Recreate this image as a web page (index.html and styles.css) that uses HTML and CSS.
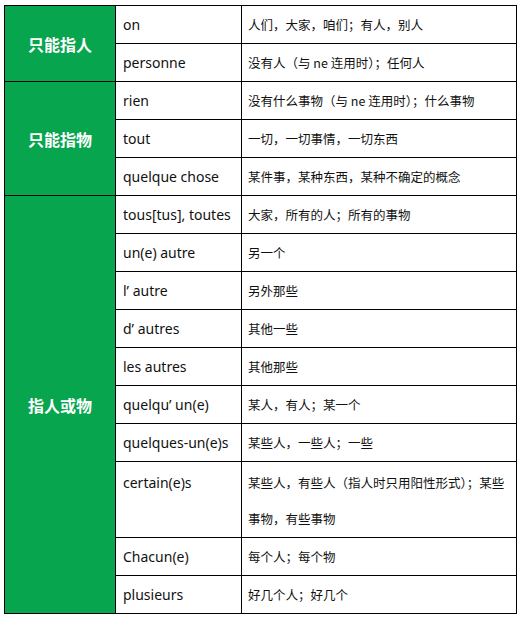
FILE: index.html
```html
<!DOCTYPE html>
<html lang="zh-CN">
<head>
<meta charset="utf-8">
<title>泛指代词</title>
<link rel="stylesheet" href="styles.css">
</head>
<body>
<div class="page">
<table class="grid">
  <colgroup>
    <col class="c1"><col class="c2"><col class="c3">
  </colgroup>
  <tbody>
    <tr><th class="cat" rowspan="2">只能指人</th><td class="fr">on</td><td class="zh">人们，大家，咱们；有人，别人</td></tr>
    <tr><td class="fr">personne</td><td class="zh">没有人（与 ne 连用时）；任何人</td></tr>
    <tr><th class="cat" rowspan="3">只能指物</th><td class="fr">rien</td><td class="zh">没有什么事物（与 ne 连用时）；什么事物</td></tr>
    <tr><td class="fr">tout</td><td class="zh">一切，一切事情，一切东西</td></tr>
    <tr><td class="fr">quelque chose</td><td class="zh">某件事，某种东西，某种不确定的概念</td></tr>
    <tr><th class="cat" rowspan="11">指人或物</th><td class="fr">tous[tus], toutes</td><td class="zh">大家，所有的人；所有的事物</td></tr>
    <tr><td class="fr">un(e) autre</td><td class="zh">另一个</td></tr>
    <tr><td class="fr">l’&nbsp;autre</td><td class="zh">另外那些</td></tr>
    <tr><td class="fr">d’&nbsp;autres</td><td class="zh">其他一些</td></tr>
    <tr><td class="fr">les autres</td><td class="zh">其他那些</td></tr>
    <tr><td class="fr">quelqu’&nbsp;un(e)</td><td class="zh">某人，有人；某一个</td></tr>
    <tr><td class="fr">quelques-un(e)s</td><td class="zh">某些人，一些人；一些</td></tr>
    <tr class="tall"><td class="fr top">certain(e)s</td><td class="zh top">某些人，有些人（指人时只用阳性形式）；某些<br>事物，有些事物</td></tr>
    <tr><td class="fr">Chacun(e)</td><td class="zh">每个人；每个物</td></tr>
    <tr><td class="fr">plusieurs</td><td class="zh">好几个人；好几个</td></tr>
  </tbody>
</table>
</div>
</body>
</html>
```

FILE: styles.css
```css
html, body {
  margin: 0;
  padding: 0;
  background: #ffffff;
}

.page {
  padding: 5px 0 0 4px;
}

.grid {
  border-collapse: collapse;
  table-layout: fixed;
  width: 512px;
  border: 1.5px solid #000;
  font-family: "Noto Sans", "Noto Sans CJK SC", sans-serif;
  color: #111;
}

.c1 { width: 111px; }
.c2 { width: 126px; }
.c3 { width: 275px; }

.grid th,
.grid td {
  border: 1px solid #000;
  height: 37px;
  padding: 0;
  vertical-align: middle;
  white-space: nowrap;
  overflow: hidden;
}

.cat {
  background: #07a54e;
  color: #ffffff;
  font-family: "Noto Sans CJK SC", sans-serif;
  font-weight: 700;
  font-size: 16px;
  text-align: center;
}

.fr {
  font-size: 14px;
  padding-left: 7px !important;
  text-align: left;
}

.zh {
  font-family: "Noto Sans CJK SC", sans-serif;
  font-size: 12.5px;
  padding-left: 6px !important;
  text-align: left;
}

.grid .tall td {
  height: 72px;
  padding-top: 3px;
  vertical-align: top;
  line-height: 36px;
}
```
